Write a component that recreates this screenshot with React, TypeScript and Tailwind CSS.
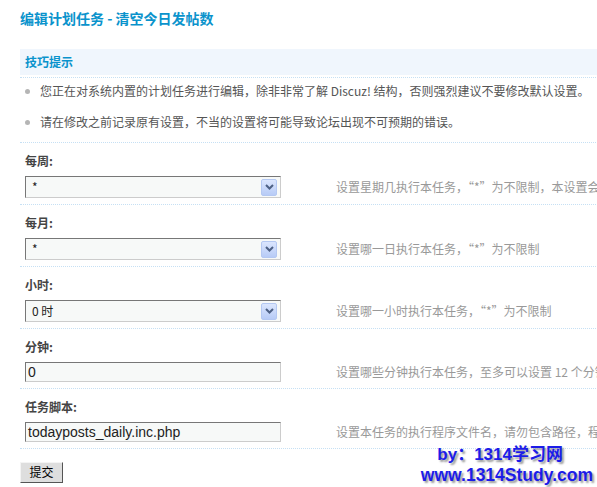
import React from "react";

const CN = '"Noto Sans CJK SC", "Noto Sans", sans-serif';

type Field = {
  label: string;
  kind: "select" | "input";
  value: string;
  desc: string;
};

const FIELDS: Field[] = [
  {
    label: "每周:",
    kind: "select",
    value: "*",
    desc: "设置星期几执行本任务，“*”为不限制，本设置会覆盖下面的“日”设定",
  },
  { label: "每月:", kind: "select", value: "*", desc: "设置哪一日执行本任务，“*”为不限制" },
  { label: "小时:", kind: "select", value: "0 时", desc: "设置哪一小时执行本任务，“*”为不限制" },
  {
    label: "分钟:",
    kind: "input",
    value: "0",
    desc: "设置哪些分钟执行本任务，至多可以设置 12 个分钟值，多个值之间用半角逗号 \",\" 隔开，留空为不限制",
  },
  {
    label: "任务脚本:",
    kind: "input",
    value: "todayposts_daily.inc.php",
    desc: "设置本任务的执行程序文件名，请勿包含路径，程序脚本统一存放于 ./include/cron/ 目录中",
  },
];

function SelectBox({ value }: { value: string }) {
  return (
    <div className="flex h-[22px] w-[256px] shrink-0 items-center justify-between border border-t-[#777] border-l-[#777] border-b-[#ccc] border-r-[#ccc] bg-[#f7f9f8] pl-[6px] pr-[3px]">
      <span className="text-[12px] leading-none text-[#222]">{value}</span>
      <span className="flex h-[17px] w-[16px] items-center justify-center rounded-[2px] border border-[#b4c8f2] bg-gradient-to-b from-[#dbe6fe] to-[#b7cbf6]">
        <svg width="9" height="6" viewBox="0 0 9 6">
          <path d="M1 1 L4.5 4.5 L8 1" fill="none" stroke="#4d6185" strokeWidth="2" />
        </svg>
      </span>
    </div>
  );
}

function TextBox({ value }: { value: string }) {
  return (
    <div className="flex h-[20px] w-[256px] shrink-0 items-center border border-t-[#777] border-l-[#777] border-b-[#ccc] border-r-[#ccc] bg-[#f7f9f8] pl-[2px]">
      <span className="text-[14px] leading-none text-[#222]" style={{ fontFamily: '"Liberation Sans", Arial, sans-serif' }}>
        {value}
      </span>
    </div>
  );
}

export default function App() {
  return (
    <div className="relative h-[487px] w-[597px] overflow-hidden bg-white" style={{ fontFamily: CN }}>
      <div className="w-[760px] pl-[20px]">
        <h3 className="pt-[9px] text-[14px] font-bold leading-[18px] text-[#0a93cc]">
          编辑计划任务 - 清空今日发帖数
        </h3>

        <div className="mt-[22px] flex h-[26px] items-center bg-[#f0f6fd] pl-[5px]">
          <span className="text-[12px] font-bold text-[#0a93cc]">技巧提示</span>
        </div>
        <ul className="mt-[2px] border-t border-dotted border-[#c6e0f4] pb-[2px]">
          {[
            "您正在对系统内置的计划任务进行编辑，除非非常了解 Discuz! 结构，否则强烈建议不要修改默认设置。",
            "请在修改之前记录原有设置，不当的设置将可能导致论坛出现不可预期的错误。",
          ].map((t) => (
            <li key={t} className="flex h-[31px] items-start pt-[6px] pl-[5px]">
              <span className="mt-[5px] h-[5px] w-[5px] shrink-0 rounded-full bg-[#b5b5b5]" />
              <span className="ml-[10px] whitespace-nowrap text-[12px] leading-[14px] text-[#555]">{t}</span>
            </li>
          ))}
        </ul>

        {FIELDS.map((f) => (
          <div key={f.label} className="border-t border-dotted border-[#c6e0f4]">
            <div className="flex h-[30px] items-end pl-[5px] pb-[5px]">
              <span className="text-[12px] font-bold leading-[14px] text-[#444]">{f.label}</span>
            </div>
            <div className="flex items-center pl-[5px] pt-[3px] pb-[6px]">
              {f.kind === "select" ? <SelectBox value={f.value} /> : <TextBox value={f.value} />}
              <span className="ml-[55px] whitespace-nowrap text-[12px] text-[#999]">{f.desc}</span>
            </div>
          </div>
        ))}

        <div className="border-t border-dotted border-[#c6e0f4] pt-[9px]">
          <button className="h-[21px] w-[43px] border border-t-[#f4f4f4] border-l-[#f4f4f4] border-b-[#555] border-r-[#555] bg-[#dedede] text-[12px] leading-none text-black">
            提交
          </button>
        </div>
      </div>

      <div
        className="absolute right-[4px] bottom-[2px] flex flex-col items-end font-bold leading-[20px] text-[#1c1ce8]"
        style={{ fontFamily: '"Liberation Sans", Arial, "Noto Sans CJK SC", sans-serif', textShadow: "2px 2px 2px #9a9a9a" }}
      >
        <span className="mr-[30px] text-[17px]">by：1314学习网</span>
        <span className="text-[17.5px]">www.1314Study.com</span>
      </div>
    </div>
  );
}
